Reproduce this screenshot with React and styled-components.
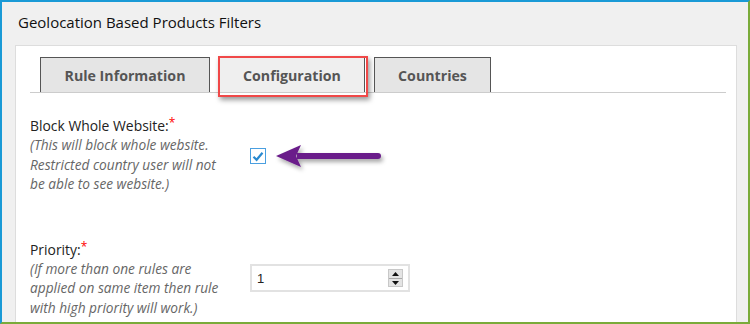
import React from "react";
import styled, { createGlobalStyle } from "styled-components";

const Global = createGlobalStyle`
  html, body { margin: 0; padding: 0; background: #f0f0f0; }
  * { box-sizing: border-box; }
`;

const Frame = styled.div`
  width: 750px;
  height: 324px;
  overflow: hidden;
  background: #f0f0f0;
  border-top: 2px solid #1a9ad6;
  border-left: 2px solid #1a9ad6;
  border-right: 2px solid #7aab3a;
  border-bottom: 2px solid #7aab3a;
  padding: 0 11px 0 13px;
  font-family: "Open Sans", "Noto Sans", sans-serif;
`;

const Title = styled.div`
  height: 43px;
  display: flex;
  align-items: center;
  padding-left: 3px;
  padding-bottom: 3px;
  font-family: "Open Sans", sans-serif;
  font-size: 15px;
  color: #111;
`;

const Panel = styled.div`
  background: #fff;
  border: 1px solid #dddddd;
  padding: 11px 10px 0 14px;
  height: 400px;
`;

const TabBar = styled.div`
  display: flex;
  gap: 9px;
  padding-left: 10px;
  border-bottom: 1px solid #cccccc;
  height: 36px;
`;

const Tab = styled.div`
  position: relative;
  width: ${(p) => p.$w}px;
  height: 35px;
  background: ${(p) => (p.$active ? "#efefef" : "#e5e5e5")};
  border: 1px solid #555;
  border-bottom: none;
  display: flex;
  align-items: center;
  justify-content: center;
  font-weight: 700;
  font-size: 14.2px;
  color: #555;
`;

const Highlight = styled.div`
  position: absolute;
  top: -2px;
  left: -2px;
  right: -4px;
  bottom: -5px;
  border: 2.5px solid #f04848;
  box-shadow: 2px 3px 5px rgba(0, 0, 0, 0.4);
  pointer-events: none;
`;

const Form = styled.div`
  padding-top: 23px;
  display: flex;
  flex-direction: column;
  gap: 46px;
`;

const Row = styled.div`
  display: grid;
  grid-template-columns: 220px 1fr;
  align-items: center;
`;

const LabelBlock = styled.div`
  display: flex;
  flex-direction: column;
`;

const Label = styled.div`
  font-size: 13.9px;
  color: #222;
  line-height: 19px;
`;

const Star = styled.sup`
  color: #f00;
  font-size: 12px;
  line-height: 0;
  vertical-align: 4px;
`;

const Desc = styled.div`
  font-style: italic;
  font-size: 13.7px;
  color: #666;
  line-height: 19.5px;
  white-space: nowrap;
`;

const Control = styled.div`
  display: flex;
  align-items: center;
  gap: 10px;
  padding-top: ${(p) => p.$pt || 0}px;
`;

const CheckBox = styled.span`
  width: 16px;
  height: 16px;
  border: 1px solid #4a9fe0;
  background: #fff;
  display: flex;
  align-items: center;
  justify-content: center;
`;

const NumberBox = styled.div`
  position: relative;
  width: 160px;
  height: 28px;
  border: 2px solid #e2e2e2;
  display: flex;
  align-items: center;
  padding-left: 5px;
  font-family: "Liberation Sans", Arial, sans-serif;
  font-size: 13px;
  color: #222;
`;

const Spinner = styled.div`
  position: absolute;
  right: 5px;
  top: 3px;
  width: 15px;
  height: 18px;
  background: #e4e4e4;
  border: 1px solid #c8c8c8;
  display: flex;
  flex-direction: column;
`;

const SpinHalf = styled.div`
  flex: 1;
  display: flex;
  align-items: center;
  justify-content: center;
  border-top: ${(p) => (p.$bottom ? "1px solid #aaa" : "none")};
`;

export default function App() {
  return (
    <>
      <Global />
      <Frame>
        <Title>Geolocation Based Products Filters</Title>
        <Panel>
          <TabBar>
            <Tab $w={170}>Rule Information</Tab>
            <Tab $w={146} $active>
              Configuration
              <Highlight />
            </Tab>
            <Tab $w={117}>Countries</Tab>
          </TabBar>
          <Form>
            <Row>
              <LabelBlock>
                <Label>
                  Block Whole Website:<Star>*</Star>
                </Label>
                <Desc>(This will block whole website.</Desc>
                <Desc>Restricted country user will not</Desc>
                <Desc>be able to see website.)</Desc>
              </LabelBlock>
              <Control $pt={3}>
                <CheckBox>
                  <svg width="12" height="11" viewBox="0 0 12 11">
                    <path d="M1.5 5.8 L4.6 8.8 L10.5 1.8" fill="none" stroke="#2a8ad0" strokeWidth="2.2" />
                  </svg>
                </CheckBox>
                <svg width="110" height="30" viewBox="0 0 110 30" style={{ overflow: "visible" }}>
                  <defs>
                    <filter id="sh" x="-20%" y="-50%" width="140%" height="200%">
                      <feDropShadow dx="2" dy="3" stdDeviation="2" floodColor="#000" floodOpacity="0.35" />
                    </filter>
                  </defs>
                  <g filter="url(#sh)">
                    <path d="M21 12 L102 12 A3 3 0 0 1 102 18 L21 18 Z" fill="#6a1f8a" />
                    <path d="M0 15 L25 4 L20 15 L25 26 Z" fill="#6a1f8a" />
                  </g>
                </svg>
              </Control>
            </Row>
            <Row>
              <LabelBlock>
                <Label>
                  Priority:<Star>*</Star>
                </Label>
                <Desc>(If more than one rules are</Desc>
                <Desc>applied on same item then rule</Desc>
                <Desc>with high priority will work.)</Desc>
              </LabelBlock>
              <Control>
                <NumberBox>
                  1
                  <Spinner>
                    <SpinHalf>
                      <svg width="7" height="4" viewBox="0 0 7 4"><path d="M0 4 L3.5 0 L7 4 Z" fill="#111" /></svg>
                    </SpinHalf>
                    <SpinHalf $bottom>
                      <svg width="7" height="4" viewBox="0 0 7 4"><path d="M0 0 L3.5 4 L7 0 Z" fill="#111" /></svg>
                    </SpinHalf>
                  </Spinner>
                </NumberBox>
              </Control>
            </Row>
          </Form>
        </Panel>
      </Frame>
    </>
  );
}
